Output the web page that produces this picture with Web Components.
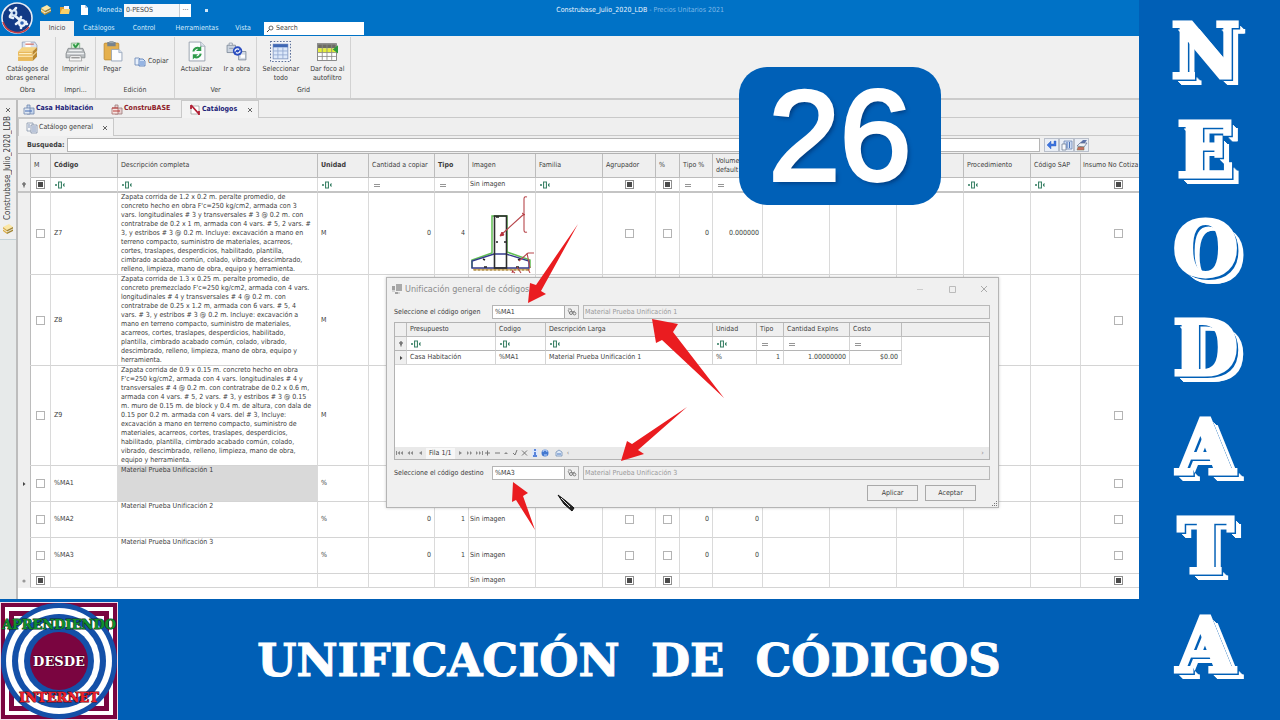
<!DOCTYPE html>
<html lang="es">
<head>
<meta charset="utf-8">
<title>Neodata 26 - Unificación de códigos</title>
<style>
  html, body { margin: 0; height: 100%; }
  body { font: 7px/9px "DejaVu Sans Condensed", "DejaVu Sans", sans-serif; color: #3c3c3c; background: #005fb6; }
</style>
</head>
<body>
<neo-slide></neo-slide>

<script>
const define = (name, html, setup) => {
  const tpl = document.createElement('template');
  tpl.innerHTML = '<style>*{box-sizing:border-box}button,input{font:inherit;color:inherit;margin:0}button{cursor:pointer}</style>' + html;
  customElements.define(name, class extends HTMLElement {
    constructor() {
      super();
      this.attachShadow({ mode: 'open' });
    }
    connectedCallback() {
      if (this.shadowRoot.childNodes.length) return;
      this.shadowRoot.append(tpl.content.cloneNode(true));
      if (setup) setup(this, this.shadowRoot);
    }
  });
};

/* ---------- icons ---------- */
const ICONS = {
  orb: ['0 0 32 32', `<circle cx="16" cy="16" r="15" fill="#123a86" stroke="#e8edf4" stroke-width="1.6"/><path d="M2 20A15 15 0 0 0 28 25" fill="none" stroke="#c23b42" stroke-width="1.6"/><g fill="none" stroke="#e9f2fb" stroke-width="2.600" stroke-linecap="round"><path d="M9 8l5 4M15 6l-6 8M13 13l7 6M20 15l-2 5M25 20l-5 4M20 26l1-5 5 1M15 22l4-3M9 15l3 1"/></g><circle cx="13" cy="11" r="3.400" fill="#d6e6f6"/><circle cx="21" cy="21" r="4" fill="#e9f2fb"/><circle cx="21" cy="21" r="1.800" fill="#2f62b5"/><circle cx="13" cy="11" r="1.400" fill="#123a86"/>`],
  catalog: ['0 0 20 20', `<path d="M5 1h12l2 3v5H5z" fill="#d9e2f0" stroke="#8795b0" stroke-width=".7"/><path d="M8 1h5v5H8z" fill="#fff"/><path d="M8 3h8" stroke="#d05b4a"/><path d="M1 10l4-4h14l-4 4z" fill="#f6d481"/><path d="M1 10h14v9H1z" fill="#e9b95a"/><path d="M15 10l4-4v9l-4 4z" fill="#b98730"/><path d="M1 14.500h14M2 12h12" stroke="#fff0c4"/><path d="M15 14l4-4" stroke="#f2d79a"/>`],
  folder: ['0 0 12 12', `<path d="M1 3h4l1 1h4v6H1z" fill="#d99b32"/><path d="M5 2h5v4H5z" fill="#eef3ff"/><path d="M1 10l2-5h8l-1 5z" fill="#f9d068"/>`],
  page: ['0 0 12 12', `<path d="M3 1h4l3 3v7H3z" fill="#fff"/><path d="M7 1v3h3" fill="#b9cbe0"/>`],
  print: ['0 0 20 20', `<path d="M6 2h8v6H6z" fill="#d7f1d5" stroke="#77a579" stroke-width=".7"/><path d="M8 3l2 3 3-4" fill="none" stroke="#2f9b45" stroke-width="1.800"/><path d="M3 7h14l2 5v4H1v-4z" fill="#b9bdc0" stroke="#7b8083" stroke-width=".7"/><path d="M4 9h12M2 12h16" stroke="#eef0f1" stroke-width="1.200"/><path d="M5 14h10l1 5H4z" fill="#f7f7f7" stroke="#888" stroke-width=".6"/><path d="M6 16h8" stroke="#777"/>`],
  paste: ['0 0 20 20', `<rect x="2" y="2" width="14" height="16" rx="1" fill="#e5b04d" stroke="#b8842c" stroke-width=".7"/><path d="M5 1h8v4H5z" fill="#77838d"/><path d="M7 0h4v2H7z" fill="#9ca6ad"/><path d="M9 8h7l3 3v8H9z" fill="#fbfcfe" stroke="#8c9cb3" stroke-width=".8"/><path d="M16 8v3h3" fill="#d0dcec" stroke="#8c9cb3" stroke-width=".6"/>`],
  copy: ['0 0 12 12', `<path d="M1 3h4l2 2v5H1z" fill="#e8f0fb" stroke="#6684b4" stroke-width=".8"/><path d="M5 4h4l2 2v5H5z" fill="#cfe0f7" stroke="#4c73b4" stroke-width=".8"/><path d="M6 7h4M6 9h4" stroke="#3f74c5" stroke-width=".8"/>`],
  refresh: ['0 0 20 20', `<path d="M3 1h11l4 4v14H3z" fill="#fbfcfd" stroke="#8b96a4" stroke-width=".8"/><path d="M14 1v4h4" fill="#dbe3ed" stroke="#8b96a4" stroke-width=".6"/><path d="M7 10a4 4 0 0 1 6-3" fill="none" stroke="#2f9b4a" stroke-width="2"/><path d="M14.500 4.500v5h-5z" fill="#2f9b4a"/><path d="M14 12a4 4 0 0 1-6 3" fill="none" stroke="#2f9b4a" stroke-width="2"/><path d="M6.500 17.500v-5h5z" fill="#2f9b4a"/>`],
  goto: ['0 0 20 20', `<path d="M1 4h8v7H1z" fill="#cbd3de" stroke="#6f7c8e" stroke-width=".7"/><path d="M3 2h3v2H3zM3 7h4" fill="#fff" stroke="#8894a4" stroke-width=".8"/><path d="M12 10h7v8h-7z" fill="#d3dae4" stroke="#6f7c8e" stroke-width=".7"/><path d="M14 13h4v3h-4z" fill="#fff"/><circle cx="11" cy="9.500" r="4.500" fill="#2a4dc0"/><path d="M8.500 10a2.500 2.500 0 0 1 4-2M13.500 9a2.500 2.500 0 0 1-4 2" fill="none" stroke="#fff" stroke-width="1.200"/>`],
  selectall: ['0 0 20 20', `<rect x=".5" y=".5" width="19" height="19" fill="#f4f6fa" stroke="#5c7099" stroke-dasharray="1.500 1.500"/><rect x="3" y="3" width="14" height="14" fill="#dce8fa" stroke="#7c93bd" stroke-width=".8"/><path d="M3 3h14v3H3z" fill="#4068b4"/><path d="M3 9.500h14M3 13.200h14M7.500 6v11M12.300 6v11" stroke="#91a8d0" stroke-width=".8"/>`],
  filterfocus: ['0 0 20 20', `<rect x=".5" y="2.500" width="18" height="16" fill="#fff" stroke="#777" stroke-width=".8"/><path d="M1 3h17v4H1z" fill="#6c6c66"/><path d="M1 7h17v4H1z" fill="#e5ef3a"/><path d="M1 11h17M1 14.700h17M5 3v15M9.500 3v15M14 3v15" stroke="#8a8a85" stroke-width=".8"/><path d="M20 4v8l-5-4z" fill="#2d9a3c"/>`],
  obrablue: ['0 0 12 12', `<path d="M4 2h3v3h4v6H4z" fill="#c4d5ec" stroke="#6e87ad" stroke-width=".8"/><path d="M1 5h6v6H1z" fill="#dfe8f3" stroke="#6e87ad" stroke-width=".8"/><path d="M2 8h7" stroke="#4169b4"/>`],
  obrared: ['0 0 12 12', `<path d="M4 2h3v3h4v6H4z" fill="#e7cfcf" stroke="#9c7a7a" stroke-width=".8"/><path d="M1 5h6v6H1z" fill="#f6e4e1" stroke="#a76b68" stroke-width=".8"/><path d="M1 5h6M2 8h7" stroke="#b83a39"/>`],
  notebook: ['0 0 12 12', `<path d="M2 2h8v8H2z" fill="#fff" stroke="#8b8484" stroke-width=".6"/><path d="M2 1l8 9M2 1v4M10 7v4" stroke="#b32035" stroke-width="1.800"/>`],
  sheet: ['0 0 12 12', `<path d="M1 1h6v8H1z" fill="#f4f6f9" stroke="#8795aa" stroke-width=".8"/><path d="M5 3h6v8H5z" fill="#eef2f8" stroke="#7b8ba4" stroke-width=".8"/><path d="M6 5h4M6 7h4M6 9h4M2 3h2M2 5h2" stroke="#6a80aa" stroke-width=".8"/>`],
  box: ['0 0 12 12', `<path d="M1 4l6-3 4 3-6 3z" fill="#fbe7a6"/><path d="M1 4l4 3v4L1 8z" fill="#d8ab45"/><path d="M5 7l6-3v4l-6 3z" fill="#a08434"/><path d="M1 6l4 3 6-3" fill="none" stroke="#fff" stroke-width=".8"/>`],
  enter: ['0 0 12 12', `<path d="M10 2v5H5v3L1 6l4-4v3h3V2z" fill="#3c74df" stroke="#2858bd" stroke-width=".4"/>`],
  window: ['0 0 12 12', `<path d="M3 2h8v8H3z" fill="#cddcf4" stroke="#6d87b4" stroke-width=".8"/><path d="M1 5h4v6H1z" fill="#f7f9fc" stroke="#75839a" stroke-width=".8"/><path d="M6 3v6M8.500 3v6" stroke="#4c73b6"/>`],
  eraser: ['0 0 12 12', `<path d="M4 4l3-3h4L8 5z" fill="#5d73aa"/><path d="M1 7l3-3h7L8 8z" fill="#eef1f6" stroke="#59678a" stroke-width=".7"/><path d="M2 8h6v3H1z" fill="#c96d62" stroke="#774" stroke-width=".5"/>`],
  abc: ['0 0 12 8', `<g fill="none" stroke="#3c8268"><rect x="4.500" y="1" width="3" height="6" fill="#e9f4ee"/><path d="M1 4h2M2 3v2" stroke-width="1.200"/><path d="M11 3H9.500v2H11"/></g>`],
  eq: ['0 0 12 8', `<path d="M2 3.500h6M2 5.500h6" stroke="#969696" stroke-width="1"/>`],
  funnel: ['0 0 6 6', `<circle cx="3" cy="2" r="1.300" fill="#9b9b9b" stroke="#555" stroke-width=".8"/><path d="M3 3v2.500" stroke="#555"/>`],
  tri: ['0 0 6 6', `<path d="M2 1l2.500 2L2 5z" fill="#444"/>`],
  star: ['0 0 6 6', `<circle cx="3" cy="3" r="1.600" fill="#999"/>`],
  close: ['0 0 6 6', `<path d="M1 1l4 4M5 1L1 5" stroke="#555" stroke-width=".9"/>`],
  lens: ['0 0 8 8', `<circle cx="5" cy="3" r="2" fill="none" stroke="#444" stroke-width=".8"/><path d="M3.500 4.500L1 7" stroke="#444"/>`],
  binocular: ['0 0 10 8', `<path d="M1 1l3 0 1 3 3-1M1 2l2 4" fill="none" stroke="#777" stroke-width=".8"/><circle cx="4" cy="5" r="1.500" fill="#eee" stroke="#666" stroke-width=".8"/><circle cx="7.500" cy="5.500" r="1.400" fill="#eee" stroke="#666" stroke-width=".8"/>`],
  app: ['0 0 12 12', `<path d="M5 1h6v7H5z" fill="#a9a9a9"/><path d="M1 3h3v4H1zM4 9h3v2H4z" fill="#a0a0a0"/><path d="M1 8h3M8 9v2" stroke="#b5b5b5"/>`],
  mail: ['0 0 8 8', `<path d="M1 3l3-2 3 2v4H1z" fill="#dce8f7" stroke="#6685af" stroke-width=".7"/><path d="M2 5h4" stroke="#4e79bd"/>`],
  footing: ['0 0 64 80', `<path d="M3 74.500h57v2H3z" fill="#d7b36c"/><path d="M2 74V66l20-7V22h15v36l23 8v8" fill="none" stroke="#5fbf52" stroke-width="1.500"/><path d="M2 74V67l22-7h12l23 7v7z" fill="none" stroke="#343b8c" stroke-width="1.400"/><rect x="24.500" y="22" width="12" height="52" fill="none" stroke="#2c2c2c" stroke-width="1.600"/><path d="M26 23h3M26 48h2M34 48h2M13 65l2 1M50 65l-2 1M14 73h3M46 73h3" stroke="#222" stroke-width="1.500"/><path d="M57 3q-3-1-3 2v31q0 3 3 2M54 20L31 41M58 59h6M58 59l-9 8M57 59l3 15M47 73l4 6M42 77l3 2" fill="none" stroke="#b7474c" stroke-width="1.100"/><path d="M30 42l2-4 2 3zM52 19l3 2M43 76l-1 3M58 75l2 4" fill="#b7323b" stroke="#b7323b"/><path d="M4 76h55" stroke="#9a7b36" stroke-dasharray="2 2"/>`]
};
define('neo-icon', `<style>:host{display:inline-block;flex:none;line-height:0}svg{display:block;width:100%;height:100%}</style>`, (host, root) => {
  const [box, body] = ICONS[host.getAttribute('name')];
  const w = host.getAttribute('w') || 12, h = host.getAttribute('h') || w;
  host.style.width = w + 'px';
  host.style.height = h + 'px';
  root.innerHTML += `<svg viewBox="${box}" aria-hidden="true">${body}</svg>`;
});

/* ---------- title bar and ribbon tabs ---------- */
define('neo-titlebar', `
<style>
:host{display:grid;grid-template-columns:40px 1fr;height:36px;background:#0072c6;color:#fff}
.orb{padding:2px 0 0 1px}
.rows{display:grid;grid-template-rows:20px 16px;min-width:0}
.top,.tabs{display:flex;align-items:center;min-width:0}
.top label{margin:0 2px 0 7px;color:#d9ecfa}
.combo{display:flex;width:67px;height:13px;background:#fff;color:#444}
.combo input{width:55px;height:13px;border:0;padding:0 2px;background:#f4f8fb}
.combo button{display:grid;place-items:center;width:12px;height:13px;border:0;border-left:1px solid #c5ccd3;padding:0;background:#fff;line-height:9px}
.quick{display:flex;gap:7px}
.dot{width:3px;height:3px;margin-left:14px;background:#cfe6f8}
.title{margin-left:auto;margin-right:415px;white-space:pre;color:#eaf5ff}
.title span{color:#7db8e8}
.tabs{align-items:stretch}
.tabs a{padding:4px 0 0;text-align:center;text-decoration:none;color:#d6ebfb;line-height:9px}
.tabs a:nth-child(1){width:34px;background:#f0f0f0;color:#444;margin-top:1px;padding-top:3px}
.tabs a:nth-child(2){width:50px}.tabs a:nth-child(3){width:40px}.tabs a:nth-child(4){width:66px}.tabs a:nth-child(5){width:26px}
.search{display:flex;align-items:center;gap:2px;width:100px;height:13px;margin:2px 0 0 8px;padding-left:2px;background:#fff;color:#444}
.search input{width:80px;border:0;padding:0;outline:0;line-height:9px}
.search input::placeholder{color:#444}
</style>
<div class="orb"><neo-icon name="orb" w="32"></neo-icon></div>
<div class="rows">
  <div class="top">
    <div class="quick"><neo-icon name="box"></neo-icon><neo-icon name="folder"></neo-icon><neo-icon name="page"></neo-icon></div>
    <label for="mon">Moneda</label>
    <div class="combo"><input id="mon" value="0-PESOS"><button aria-label="Elegir moneda">···</button></div>
    <i class="dot"></i>
    <div class="title">Construbase_Julio_2020_LDB <span>- Precios Unitarios 2021</span></div>
  </div>
  <nav class="tabs"><a href="#i">Inicio</a><a href="#c">Catálogos</a><a href="#k">Control</a><a href="#h">Herramientas</a><a href="#v">Vista</a>
    <div class="search"><neo-icon name="lens" w="8"></neo-icon><input aria-label="Search" placeholder="Search"></div></nav>
</div>`);

/* ---------- ribbon ---------- */
define('neo-group', `
<style>
:host{display:grid;grid-template-rows:1fr 12px;border-right:1px solid #d2d2d2}
.items{display:flex;justify-content:space-around}
.cap{text-align:center}
</style>
<div class="items"><slot></slot></div><div class="cap"></div>`, (h, r) => { r.querySelector('.cap').textContent = h.getAttribute('caption'); });
define('neo-tool', `
<style>
:host{display:block}
button{display:flex;flex-direction:column;align-items:center;gap:3px;border:0;padding:4px 0 0;background:none;line-height:9px;white-space:nowrap}
:host([inline]) button{flex-direction:row;padding-top:18px;gap:2px}
</style>
<button><span><slot></slot></span></button>`, (h, r) => {
  const i = document.createElement('neo-icon');
  i.setAttribute('name', h.getAttribute('icon'));
  i.setAttribute('w', h.hasAttribute('inline') ? 12 : 21);
  r.querySelector('button').prepend(i);
});
define('neo-ribbon', `
<style>
:host{display:flex;height:64px;padding:1px 0 0;background:#f0f0f0;border-bottom:2px solid #cbcbcb}
neo-group:nth-of-type(1){width:56px}neo-group:nth-of-type(2){width:40px}neo-group:nth-of-type(3){width:79px}
neo-group:nth-of-type(4){width:82px}neo-group:nth-of-type(5){width:94px}
</style>
<neo-group caption="Obra"><neo-tool icon="catalog">Catálogos de<br>obras general</neo-tool></neo-group>
<neo-group caption="Impri..."><neo-tool icon="print">Imprimir</neo-tool></neo-group>
<neo-group caption="Edición"><neo-tool icon="paste">Pegar</neo-tool><neo-tool icon="copy" inline>Copiar</neo-tool></neo-group>
<neo-group caption="Ver"><neo-tool icon="refresh">Actualizar</neo-tool><neo-tool icon="goto">Ir a obra</neo-tool></neo-group>
<neo-group caption="Grid"><neo-tool icon="selectall">Seleccionar<br>todo</neo-tool><neo-tool icon="filterfocus">Dar foco al<br>autofiltro</neo-tool></neo-group>`);

/* ---------- side strip ---------- */
define('neo-side', `
<style>
:host{display:flex;flex-direction:column;align-items:center;background:#e7eaea;border-right:2px solid #bdbdbd}
.tab{display:flex;flex-direction:column;align-items:center;gap:3px;width:16px;padding:7px 0 4px;background:#efefef;border-bottom:1px solid #c5d3d8}
.name{writing-mode:vertical-rl;transform:rotate(180deg);font-size:8px;line-height:10px}
</style>
<div class="tab"><neo-icon name="close" w="6"></neo-icon><span class="name">Construbase_Julio_2020_LDB</span><neo-icon name="box" w="12"></neo-icon></div>`);

/* ---------- document tabs and search row ---------- */
define('neo-tabs', `
<style>
:host{display:block;background:#efefef}
.row{display:flex;height:18px;border-bottom:1px solid #c9c9c9}
.row.doc{font-weight:bold;padding-left:5px}
a{display:flex;align-items:center;gap:1px;color:inherit;text-decoration:none;white-space:nowrap}
.doc a:nth-child(1){width:88px;color:#1d1d78}.doc a:nth-child(2){width:70px;color:#8e1c28}
.doc a:nth-child(3){width:78px;color:#1d1d78}
a.on{height:18px;padding:0 5px 0 7px;background:#f3f3f3;border:1px solid #c9c9c9;border-bottom:0}
a.on neo-icon:last-child{margin-left:auto}
.sub a.on{width:96px}
.find{display:grid;grid-template-columns:auto 1fr auto;align-items:center;gap:2px;padding:2px 50px 1px 9px}
label{font-weight:bold}
input{width:100%;height:14px;border:1px solid #b5b5b5;background:#fff;padding:0 2px}
.btns{display:flex;margin-left:2px}
button{display:grid;place-items:center;width:15px;height:14px;padding:0;border:1px solid #b9bfca;background:#e9eef6}
</style>
<nav class="row doc"><a href="#1"><neo-icon name="obrablue"></neo-icon>Casa Habitación</a><a href="#2"><neo-icon name="obrared"></neo-icon>ConstruBASE</a><a class="on" href="#3"><neo-icon name="notebook"></neo-icon>Catálogos<neo-icon name="close" w="6"></neo-icon></a></nav>
<nav class="row sub"><a class="on" href="#4"><neo-icon name="sheet"></neo-icon>Catálogo general<neo-icon name="close" w="6"></neo-icon></a></nav>
<div class="find"><label for="q">Busqueda:</label><input id="q"><div class="btns"><button aria-label="Buscar"><neo-icon name="enter"></neo-icon></button><button aria-label="Ventana"><neo-icon name="window"></neo-icon></button><button aria-label="Limpiar"><neo-icon name="eraser"></neo-icon></button></div></div>`);

/* ---------- main grid ---------- */
const COLS = [13, 20, 67, 200, 51, 66, 34, 67, 67, 53, 24, 33, 50, 67, 67, 67, 67, 50, 0];
const HEAD = ['', 'M', '*Código', 'Descripción completa', '*Unidad', 'Cantidad a copiar', '*Tipo', 'Imagen', 'Familia', 'Agrupador', '%', 'Tipo %', 'Volumen default', '', '', '', 'Procedimiento', 'Código SAP', 'Insumo No Cotiza'];
const box = (label) => `<input type="checkbox" aria-label="${label}">`;
const mid = (label) => `<input type="checkbox" class="mid" aria-label="${label}">`;
const icon = (n, w, h) => `<neo-icon name="${n}" w="${w}" h="${h || w}"></neo-icon>`;
const ABC = icon('abc', 12, 8), EQ = icon('eq', 12, 8);
const Z7 = `Zapata corrida de 1.2 x 0.2 m. peralte promedio, de
concreto hecho en obra F'c=250 kg/cm2, armada con 3
vars. longitudinales # 3 y transversales # 3 @ 0.2 m. con
contratrabe de 0.2 x 1 m, armada con 4 vars. # 5, 2 vars. #
3, y estribos # 3 @ 0.2 m. Incluye: excavación a mano en
terreno compacto, suministro de materiales, acarreos,
cortes, traslapes, desperdicios, habilitado, plantilla,
cimbrado acabado común, colado, vibrado, descimbrado,
relleno, limpieza, mano de obra, equipo y herramienta.`;
const Z8 = `Zapata corrida de 1.3 x 0.25 m. peralte promedio, de
concreto premezclado F'c=250 kg/cm2, armada con 4 vars.
longitudinales # 4 y transversales # 4 @ 0.2 m. con
contratrabe de 0.25 x 1.2 m, armada con 6 vars. # 5, 4
vars. # 3, y estribos # 3 @ 0.2 m. Incluye: excavación a
mano en terreno compacto, suministro de materiales,
acarreos, cortes, traslapes, desperdicios, habilitado,
plantilla, cimbrado acabado común, colado, vibrado,
descimbrado, relleno, limpieza, mano de obra, equipo y
herramienta.`;
const Z9 = `Zapata corrida de 0.9 x 0.15 m. concreto hecho en obra
F'c=250 kg/cm2, armada con 4 vars. longitudinales # 4 y
transversales # 4 @ 0.2 m. con contratrabe de 0.2 x 0.6 m,
armada con 4 vars. # 5, 2 vars. # 3, y estribos # 3 @ 0.15
m. muro de 0.15 m. de block y 0.4 m. de altura, con dala de
0.15 por 0.2 m. armada con 4 vars. del # 3, Incluye:
excavación a mano en terreno compacto, suministro de
materiales, acarreos, cortes, traslapes, desperdicios,
habilitado, plantilla, cimbrado acabado común, colado,
vibrado, descimbrado, relleno, limpieza, mano de obra,
equipo y herramienta.`;
const E = '';
const ROWS = [
  [15, [icon('funnel', 6), mid('M'), ABC, ABC, ABC, EQ, EQ, 'Sin imagen', ABC, mid('Agrupador'), mid('%'), EQ, EQ, E, E, E, ABC, ABC, mid('No cotizable')]],
  [82, [E, box('Z7'), 'Z7', Z7, 'M', '0', '4', icon('footing', 64, 80), E, box('Agrupador'), box('%'), '0', '0.000000', E, E, E, E, E, box('No cotizable')]],
  [90, [E, box('Z8'), 'Z8', Z8, 'M', E, E, E, E, E, E, E, E, E, E, E, E, E, box('No cotizable')]],
  [100, [E, box('Z9'), 'Z9', Z9, 'M', E, E, E, E, E, E, E, E, E, E, E, E, E, box('No cotizable')]],
  [36, [icon('tri', 6), box('%MA1'), '%MA1', 'Material Prueba Unificación 1', '%', E, E, E, E, E, E, E, E, E, E, E, E, E, box('No cotizable')]],
  [36, [E, box('%MA2'), '%MA2', 'Material Prueba Unificación 2', '%', '0', '1', 'Sin imagen', E, box('Agrupador'), box('%'), '0', '0', E, E, E, E, E, box('No cotizable')]],
  [36, [E, box('%MA3'), '%MA3', 'Material Prueba Unificación 3', '%', '0', '1', 'Sin imagen', E, box('Agrupador'), box('%'), '0', '0', E, E, E, E, E, box('No cotizable')]],
  [14, [icon('star', 6), mid('Nuevo'), E, E, E, E, E, 'Sin imagen', E, mid('Agrupador'), mid('%'), E, E, E, E, E, E, E, mid('No cotizable')]]
];
define('neo-grid', `
<style>
:host{display:block;overflow:hidden;background:#fff;border-top:1px solid #b2b2b2;min-width:0}
table{border-collapse:separate;border-spacing:0;table-layout:fixed;width:max(100%,1138px)}
th,td{padding:0 3px;border-right:1px solid #dadada;border-bottom:1px solid #d4d4d4;text-align:left;font-weight:normal;vertical-align:middle;overflow:hidden}
th{height:24px;background:#efefef;border-color:#bcbcbc}
th:last-child{white-space:nowrap;padding:0 0 0 2px}
th.b{font-weight:bold}
tr>:first-child{background:#efefef;padding:0 3px;border-right-color:#bcbcbc;border-bottom-color:#efefef}
tbody tr:first-child td{border-bottom:2px solid #c4c4c4}
td.num{text-align:right}
td.chk{text-align:center;padding:0}
td.desc{vertical-align:top;white-space:pre}
td.pic{padding:0 1px}
tr.sel td.desc{background:#d9d9d9}
neo-icon{display:block}
input{appearance:none;display:block;margin:0 auto;width:9px;height:9px;border:1px solid #b4b4b4;background:#fff}
input.mid{border-color:#8f8f8f;background:linear-gradient(#4a4a4a,#4a4a4a) center/5px 5px no-repeat #fff}
</style>
<table><colgroup></colgroup><thead><tr></tr></thead><tbody></tbody></table>`, (h, r) => {
  r.querySelector('colgroup').innerHTML = COLS.map(w => w ? `<col style="width:${w}px">` : '<col>').join('');
  r.querySelector('thead tr').innerHTML = HEAD.map(t => `<th${t[0] === '*' ? ' class="b"' : ''}>${t.replace('*', '')}</th>`).join('');
  r.querySelector('tbody').innerHTML = ROWS.map(([height, cells], y) =>
    `<tr style="height:${height}px"${y === 4 ? ' class="sel"' : ''}>` + cells.map((c, i) => {
      let k = '';
      if (c.startsWith('<input')) k = 'chk';
      else if (i === 3 && y) k = 'desc';
      else if (i === 7) k = 'pic';
      else if (/^[\d.]+$/.test(c)) k = 'num';
      return `<td class="${k}">${c}</td>`;
    }).join('') + '</tr>').join('');
});

/* ---------- dialog ---------- */
define('neo-picker', `
<style>
:host{display:grid;grid-template-columns:98px 87px 1fr;align-items:center}
.f{display:flex;height:14px;width:87px;border:1px solid #b5b5b5;background:#fff}
.f input{width:71px;border:0;padding:0 2px;background:#fff}
.f button{display:grid;place-items:center;width:14px;padding:0;border:0;border-left:1px solid #aaa;background:#efefef}
.ro{height:14px;margin-left:4px;border:1px solid #b9b9b9;background:#efefef;color:#999;padding:0 1px;min-width:0}
</style>
<label for="code"></label><div class="f"><input id="code"><button aria-label="Buscar"><neo-icon name="binocular" w="10" h="8"></neo-icon></button></div><input class="ro" readonly aria-label="Descripción">`, (h, r) => {
  r.querySelector('label').textContent = h.getAttribute('label');
  r.querySelector('#code').value = h.getAttribute('code');
  r.querySelector('.ro').value = h.getAttribute('text');
});
define('neo-dialog', `
<style>
:host{display:flex;flex-direction:column;padding:0 8px 6px 7px;background:#f0f0f0;border:1px solid #b5b5b5;box-shadow:0 0 3px #0003}
header{display:flex;align-items:center;height:21px;margin-bottom:6px;font-size:9px;line-height:12px;color:#8b8b8b}
header neo-icon{margin:0 2px 0 -3px}
.ctl{display:flex;gap:24px;margin-left:auto;padding-right:2px}
.ctl button{width:8px;height:8px;padding:0;border:0;background:none}
.ctl svg{display:block}
.list{display:flex;flex-direction:column;height:138px;margin:3px 0 6px;border:1px solid #b3b3b3;background:#fff}
.hd{background:#efefef;border-bottom:1px solid #bcbcbc}
table{border-collapse:separate;border-spacing:0;table-layout:fixed;width:507px}
th,td{height:14px;padding:0 3px;text-align:left;font-weight:normal;border-right:1px solid #d4d4d4;border-bottom:1px solid #d4d4d4;white-space:nowrap}
th{background:#efefef;border-color:#bcbcbc;border-bottom:0;height:13px}
tr>:first-child{background:#efefef;padding:0 3px}
.flt td{border-bottom-color:#b5b5b5}
td.num{text-align:right}
neo-icon{display:block}
.bar{display:flex;align-items:center;gap:2px;margin-top:auto;height:12px;padding:0 3px 0 1px;background:#e9e9e9;color:#888}
.bar span{background:#f7f7f7;color:#333;padding:1px 3px}
.bar b{font-weight:normal;width:7px;text-align:center}
.bar b:last-child{margin-left:auto}
footer{display:flex;justify-content:flex-end;gap:7px;margin-top:5px;padding-right:14px}
footer button{width:51px;height:16px;border:1px solid #a9a9a9;background:#f0f0f0;padding:0}
.grip{position:absolute;right:0;bottom:0}
</style>
<header><neo-icon name="app" w="12"></neo-icon>Unificación general de códigos
<div class="ctl"><button aria-label="Minimizar"><svg width="8" height="8"><path d="M1 4.500h6" stroke="#ccc"/></svg></button><button aria-label="Maximizar"><svg width="8" height="8"><path d="M1.500 1.500h6v6h-6z" fill="none" stroke="#bbb"/></svg></button><button aria-label="Cerrar"><svg width="8" height="8"><path d="M1 1l6 6M7 1L1 7" stroke="#aaa"/></svg></button></div></header>
<neo-picker label="Seleccione el código origen" code="%MA1" text="Material Prueba Unificación 1"></neo-picker>
<div class="list">
<div class="hd"><table><colgroup><col style="width:12px"><col style="width:89px"><col style="width:50px"><col style="width:167px"><col style="width:44px"><col style="width:27px"><col style="width:66px"><col></colgroup><tr><th></th><th>Presupuesto</th><th>Codigo</th><th>Descripción Larga</th><th>Unidad</th><th>Tipo</th><th>Cantidad ExpIns</th><th>Costo</th></tr></table></div>
<table><colgroup><col style="width:12px"><col style="width:89px"><col style="width:50px"><col style="width:167px"><col style="width:44px"><col style="width:27px"><col style="width:66px"><col></colgroup>
<tr class="flt"><td>${icon('funnel', 6)}</td><td>${ABC}</td><td>${ABC}</td><td>${ABC}</td><td>${ABC}</td><td>${EQ}</td><td>${EQ}</td><td>${EQ}</td></tr>
<tr><td>${icon('tri', 6)}</td><td>Casa Habitación</td><td>%MA1</td><td>Material Prueba Unificación 1</td><td>%</td><td class="num">1</td><td class="num">1.00000000</td><td class="num">$0.00</td></tr></table>
<div class="bar">
<svg width="28" height="8" fill="#8a8a8a"><path d="M0 2h1v4H0zM4 2v4L1.500 4zM7 2v4L4.500 4zM14 2v4L11.500 4zM17 2v4L14.500 4zM26 2v4L23 4z"/></svg><span>Fila 1/1</span>
<svg width="96" height="8" fill="#8a8a8a"><path d="M2 2v4l3-2zM10 2v4l2-2zM13 2v4l2-2zM19 2v4l2-2zM22 2v4l2-2zM25 2h1v4h-1zM47 5l2-2 2 2z"/><path d="M28 4h5M30.500 1.500v5M38 4h5M56 4l2 2 2-5M65 1.500l5 5M70 1.500l-5 5" fill="none" stroke="#777"/><path d="M75 0h6v8h-6z" fill="#dce7fb"/><path d="M78 0v2M78 3v3M76 7h4" stroke="#2f66d0" stroke-width="1.500"/><circle cx="88" cy="4" r="3.500" fill="#4479cf"/><path d="M86 3a2 2 0 0 1 4 0M87 6h3" fill="none" stroke="#c4dbff"/></svg>
<neo-icon name="mail" w="8"></neo-icon><b>‹</b><b>›</b></div>
</div>
<neo-picker label="Seleccione el código destino" code="%MA3" text="Material Prueba Unificación 3"></neo-picker>
<footer><button>Aplicar</button><button>Aceptar</button></footer>
<svg class="grip" width="6" height="6" fill="#777"><path d="M4 0h1v1H4zM4 2h1v1H4zM4 4h1v1H4zM2 2h1v1H2zM2 4h1v1H2zM0 4h1v1H0z"/></svg>`);

/* ---------- application window ---------- */
define('neo-app', `
<style>
:host{position:relative;display:grid;grid-template-rows:auto auto 1fr;grid-template-columns:minmax(0,1fr);background:#fff;overflow:hidden}
.work{display:grid;grid-template-columns:18px minmax(0,1fr)}
.main{display:flex;flex-direction:column;min-width:0}
neo-dialog{position:absolute;left:386px;top:277px;width:613px}
.arrows{position:absolute;left:0;top:0;pointer-events:none}
.badge{position:absolute;left:739px;top:67px;width:202px;height:138px;border-radius:28px;background:#0060b7;color:#fff;
 font:128px/138px "Liberation Sans",Arial,sans-serif;text-align:center;-webkit-text-stroke:4px #fff;text-shadow:3px 3px 4px #0018478c}
</style>
<neo-titlebar></neo-titlebar><neo-ribbon></neo-ribbon>
<div class="work"><neo-side></neo-side><div class="main"><neo-tabs></neo-tabs><neo-grid></neo-grid></div></div>
<neo-dialog></neo-dialog>
<svg class="arrows" width="1139" height="599" aria-hidden="true">
 <g fill="#ea1c20"><path d="M528 303L530 283L536 285L578 224L541 291L546 294z"/><path d="M652 319L678 324L673 332L724 398L662 340L656 343z"/><path d="M621 461L627 441L632 444L687 407L638 450L644 454z"/><path d="M513 482L528 493L523 496L535 530L516 500L512 502z"/></g>
 <path d="M558 495l8 6 8 7-2 3-8-7z" fill="#222" stroke="#111"/><path d="M561 498l9 9" stroke="#ddd"/>
</svg>
<div class="badge">26</div>`);

/* ---------- banners ---------- */
define('neo-word', `
<style>
:host{display:flex;flex-direction:column;align-items:center;padding:2px 8px 0 0;background:#005fb6;color:#fff;
 font:bold 76px/99px "DejaVu Serif",serif;-webkit-text-stroke:3px #fff;
 text-shadow:1px 1px #005fb6,2px 1px #005fb6,1px 2px #005fb6,2px 2px #005fb6,3px 3px #005fb6,4px 4px #fff,5px 5px #fff,6px 6px #fff,7px 7px #fff,8px 7px #fff}
span{display:block;height:99px}
</style>`, (h, r) => { for (const c of h.getAttribute('text')) { const s = document.createElement('span'); s.textContent = c; r.append(s); } });
define('neo-footer', `
<style>
:host{display:grid;grid-template-columns:118px 1fr;align-items:end;background:#005fb6;color:#fff}
svg{display:block;font-family:"DejaVu Serif",serif;font-weight:bold}
h1{align-self:center;margin:2px 0 0;padding-left:1px;text-align:center;white-space:pre;font:bold 45px/54px "DejaVu Serif",serif;-webkit-text-stroke:1px #fff}
</style>
<svg width="118" height="118" viewBox="0 0 118 118">
<path d="M0 0h118v118H0z" fill="#f3dbe8"/><path d="M1 1h116v116H1z" fill="#7a0540"/><path d="M5 5h108v108H5z" fill="#fff"/><path d="M9 9h100v100H9z" fill="#7a0540"/><path d="M14 14h90v90H14z" fill="#fff"/>
<circle cx="59" cy="59" r="58" fill="#1450a8"/><circle cx="59" cy="59" r="53" fill="#fff"/><circle cx="59" cy="59" r="47" fill="#1450a8"/><circle cx="59" cy="59" r="41" fill="#fff"/><circle cx="59" cy="59" r="35" fill="#1450a8"/><circle cx="59" cy="59" r="29" fill="#7a0540"/>
<g text-anchor="middle" font-size="13" stroke-width="1" paint-order="stroke"><text x="59" y="27" fill="#0f8f2b" stroke="#10301f">APRENDIENDO</text><text x="59" y="64" fill="#fff" stroke="#3a0320">DESDE</text><text x="59" y="100" fill="#ee2129" stroke="#5a0a14">INTERNET</text></g>
</svg>
<h1>UNIFICACIÓN  DE  CÓDIGOS</h1>`);

define('neo-slide', `
<style>
:host{display:grid;grid-template-columns:minmax(0,1fr) 141px;grid-template-rows:minmax(0,1fr) 121px;height:100vh;overflow:hidden}
neo-word{grid-column:2;grid-row:1/3}
</style>
<neo-app></neo-app><neo-word text="NEODATA"></neo-word><neo-footer></neo-footer>`);
</script>
</body>
</html>
